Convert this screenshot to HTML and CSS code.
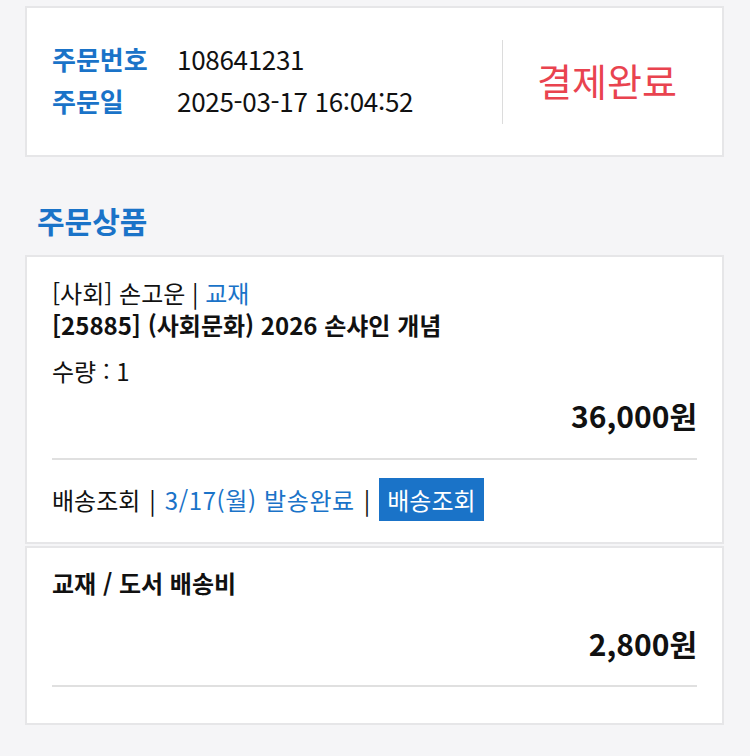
FILE: index.html
```html
<!DOCTYPE html>
<html lang="ko">
<head>
  <meta charset="UTF-8" />
  <title>주문상세</title>
  <link rel="stylesheet" href="styles.css">
</head>
<body>

  <div class="card summary">
    <div class="info">
      <div class="info-row"><span class="info-label">주문번호</span><span class="info-value">108641231</span></div>
      <div class="info-row"><span class="info-label">주문일</span><span class="info-value">2025-03-17 16:04:52</span></div>
    </div>
    <div class="summary-divider"></div>
    <div class="status">결제완료</div>
  </div>

  <h2 class="section-title">주문상품</h2>

  <div class="card item">
    <div class="item-cat">[사회] 손고운 | <span class="blue">교재</span></div>
    <div class="item-title">[25885] (사회문화) 2026 손샤인 개념</div>
    <div class="item-qty">수량 : 1</div>
    <div class="item-price">36,000원</div>
    <div class="hr"></div>
    <div class="delivery">
      <span>배송조회</span><span class="sep">|</span><span class="blue">3/17(월) 발송완료</span><span class="sep">|</span>
      <button class="track-btn">배송조회</button>
    </div>
  </div>

  <div class="card item fee">
    <div class="item-title">교재 / 도서 배송비</div>
    <div class="item-price">2,800원</div>
    <div class="hr"></div>
  </div>

</body>
</html>
```

FILE: styles.css
```css
body {
  margin: 0;
  padding: 6px 26px 0 25px;
  background-color: #f5f5f7;
  font-family: "Noto Sans CJK KR", "Noto Sans", sans-serif;
  color: #111;
}

.card {
  background: white;
  border: 2px solid #e6e6e8;
}

.blue {
  color: #1a73c8;
}

/* order summary */
.summary {
  display: flex;
  align-items: center;
  height: 147px;
  padding-left: 25px;
}

.info {
  width: 450px;
  margin-top: -4px;
}

.info-row {
  display: flex;
  font-size: 26px;
  line-height: 42px;
}

.info-label {
  width: 125px;
  color: #1a73c8;
  font-weight: bold;
}

.info-value {
  letter-spacing: -0.3px;
}

.summary-divider {
  width: 1px;
  height: 84px;
  background: #dcdcdc;
}

.status {
  padding-left: 34px;
  font-size: 38px;
  color: #e9434f;
  margin-top: -4px;
}

.section-title {
  margin: 43px 0 15px 12px;
  font-size: 30px;
  line-height: 40px;
  color: #1a73c8;
}

/* item cards */
.item {
  padding: 20px 25px 21px 25px;
  font-size: 24px;
}

.item-cat,
.item-title,
.item-qty {
  line-height: 32px;
}

.item-title {
  font-weight: bold;
}

.item-qty {
  margin-top: 14px;
}

.item-price {
  margin-top: 8px;
  text-align: right;
  font-size: 30px;
  font-weight: bold;
  line-height: 40px;
}

.hr {
  margin-top: 23px;
  height: 2px;
  background: #e0e0e0;
}

.delivery {
  display: flex;
  align-items: center;
  margin-top: 18px;
  height: 43px;
  white-space: pre;
}

.delivery .blue {
  letter-spacing: 0.6px;
}

.sep {
  margin: 0 9px;
}

.track-btn {
  height: 43px;
  padding: 0 8px;
  border: none;
  background-color: #1a73c8;
  color: white;
  font-family: inherit;
  font-size: 24px;
}

.fee {
  margin-top: 2px;
  padding-top: 19px;
  padding-bottom: 36px;
}

.fee .item-price {
  margin-top: 24px;
}

.fee .hr {
  margin-top: 22px;
}
```
